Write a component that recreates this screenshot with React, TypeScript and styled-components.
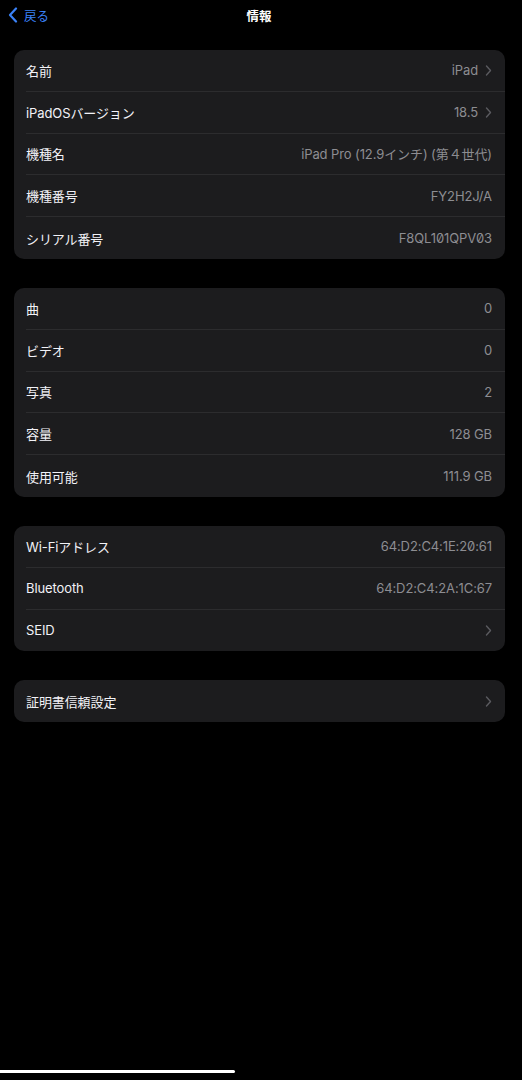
import React from "react";
import styled, { createGlobalStyle } from "styled-components";

const Global = createGlobalStyle`
  html, body { margin: 0; padding: 0; background: #000; }
  body { font-family: "Inter", "Noto Sans CJK JP", sans-serif; -webkit-font-smoothing: antialiased; }
`;

const Page = styled.div`
  width: 522px;
  height: 1080px;
  background: #000;
  position: relative;
  overflow: hidden;
  display: flex;
  flex-direction: column;
`;

const NavBar = styled.div`
  height: 30px;
  display: grid;
  grid-template-columns: 1fr auto 1fr;
  align-items: center;
  padding: 0 8px;
`;

const BackButton = styled.div`
  display: flex;
  align-items: center;
  gap: 6px;
  color: #3a82f7;
  font-size: 12.5px;
  font-family: "Noto Sans CJK JP", sans-serif;
`;

const Title = styled.div`
  color: #fff;
  font-size: 12.5px;
  font-weight: 700;
  font-family: "Noto Sans CJK JP", sans-serif;
  margin-left: -4px;
`;

const Content = styled.div`
  display: flex;
  flex-direction: column;
  gap: 29px;
  padding: 20px 17px 0 14px;
`;

const Card = styled.div`
  background: #1c1c1e;
  border-radius: 10px;
  overflow: hidden;
`;

const Row = styled.div<{ $last?: boolean }>`
  height: 41.8px;
  display: flex;
  align-items: center;
  justify-content: space-between;
  margin-left: 12px;
  padding-right: 13px;
  box-sizing: border-box;
  border-bottom: ${(p) => (p.$last ? "none" : "1px solid #2c2c2e")};
`;

const Label = styled.span`
  color: #f2f2f7;
  font-size: 13px;
  letter-spacing: -0.1px;
`;

const ValueWrap = styled.span`
  display: flex;
  align-items: center;
  gap: 7px;
`;

const Value = styled.span<{ $mono?: boolean }>`
  color: #8d8d92;
  font-size: 13px;
  letter-spacing: -0.1px;
  font-feature-settings: ${(p) => (p.$mono ? "'zero' 1" : "normal")};
`;

const HomeBar = styled.div`
  position: absolute;
  left: 0;
  bottom: 7px;
  width: 235px;
  height: 3px;
  background: #fff;
  border-radius: 0 2px 2px 0;
`;

const Chevron = () => (
  <svg width="7" height="11" viewBox="0 0 7 11" fill="none">
    <path d="M1.5 1 L5.5 5.5 L1.5 10" stroke="#5a5a5f" strokeWidth="1.4" strokeLinecap="round" strokeLinejoin="round" />
  </svg>
);

const BackChevron = () => (
  <svg width="10" height="16" viewBox="0 0 10 16" fill="none">
    <path d="M8 1.5 L2 8 L8 14.5" stroke="#3a82f7" strokeWidth="2.2" strokeLinecap="round" strokeLinejoin="round" />
  </svg>
);

type Item = { label: string; value?: string; chevron?: boolean; mono?: boolean };

const groups: Item[][] = [
  [
    { label: "名前", value: "iPad", chevron: true },
    { label: "iPadOSバージョン", value: "18.5", chevron: true },
    { label: "機種名", value: "iPad Pro (12.9インチ) (第４世代)" },
    { label: "機種番号", value: "FY2H2J/A" },
    { label: "シリアル番号", value: "F8QL101QPV03", mono: true },
  ],
  [
    { label: "曲", value: "0" },
    { label: "ビデオ", value: "0" },
    { label: "写真", value: "2" },
    { label: "容量", value: "128 GB" },
    { label: "使用可能", value: "111.9 GB" },
  ],
  [
    { label: "Wi-Fiアドレス", value: "64:D2:C4:1E:20:61", mono: true },
    { label: "Bluetooth", value: "64:D2:C4:2A:1C:67", mono: true },
    { label: "SEID", chevron: true },
  ],
  [{ label: "証明書信頼設定", chevron: true }],
];

export default function App() {
  return (
    <Page>
      <Global />
      <NavBar>
        <BackButton>
          <BackChevron />
          <span>戻る</span>
        </BackButton>
        <Title>情報</Title>
        <div />
      </NavBar>
      <Content>
        {groups.map((g, gi) => (
          <Card key={gi}>
            {g.map((it, i) => (
              <Row key={it.label} $last={i === g.length - 1}>
                <Label>{it.label}</Label>
                <ValueWrap>
                  {it.value && <Value $mono={it.mono}>{it.value}</Value>}
                  {it.chevron && <Chevron />}
                </ValueWrap>
              </Row>
            ))}
          </Card>
        ))}
      </Content>
      <HomeBar />
    </Page>
  );
}
